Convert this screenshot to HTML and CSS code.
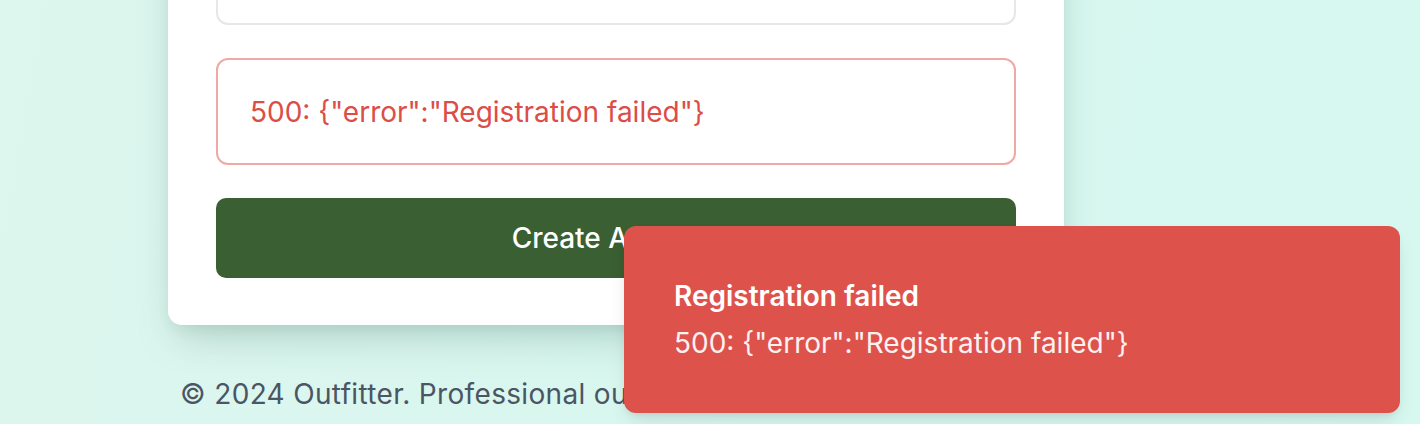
FILE: index.html
```html
<!DOCTYPE html>
<html lang="en">
<head>
<meta charset="utf-8">
<title>Create Account</title>
<link rel="stylesheet" href="styles.css">
</head>
<body>
<main class="page">
  <div class="column">
    <form class="card">
      <div class="input"></div>
      <div class="error-box">500: {"error":"Registration failed"}</div>
      <button type="button" class="submit">Create Account</button>
    </form>
    <footer class="footer">© 2024 Outfitter. Professional outdoor gear for every adventure.</footer>
  </div>
</main>
<div class="toast" role="alert">
  <div class="toast-title">Registration failed</div>
  <div class="toast-desc">500: {"error":"Registration failed"}</div>
</div>
</body>
</html>
```

FILE: styles.css
```css
* { box-sizing: border-box; }
html, body { margin: 0; padding: 0; }
body {
  width: 1420px;
  height: 424px;
  overflow: hidden;
  font-family: Inter, "Noto Sans", sans-serif;
  background: linear-gradient(100deg, #ddf6ee 0%, #d8f7ef 50%, #d6f8ef 100%);
  position: relative;
}
.page {
  display: flex;
  justify-content: flex-start;
  padding-left: 168px;
}
.column {
  width: 896px;
  display: flex;
  flex-direction: column;
  align-items: center;
}
.card {
  width: 896px;
  margin-top: -103px;
  background: #ffffff;
  border-radius: 14px;
  padding: 48px 48px 47px;
  display: flex;
  flex-direction: column;
  gap: 33px;
  box-shadow: 0 20px 40px -8px rgba(40, 90, 75, 0.22), 0 8px 16px -6px rgba(40, 90, 75, 0.12);
}
.input {
  height: 80px;
  border: 2px solid #e5e7eb;
  border-radius: 12px;
}
.error-box {
  height: 107px;
  border: 2px solid #f0a9a4;
  border-radius: 12px;
  padding: 0 32px;
  display: flex;
  align-items: center;
  color: #dc4d47;
  font-size: 28px;
}
.submit {
  height: 80px;
  border: none;
  border-radius: 10px;
  background: #3a5f32;
  color: #ffffff;
  font-family: inherit;
  font-size: 28px;
  font-weight: 500;
}
.footer {
  margin-top: 51px;
  white-space: nowrap;
  color: #4b5563;
  font-size: 28px;
  line-height: 36px;
  letter-spacing: 0.33px;
}
.toast {
  position: absolute;
  left: 624px;
  top: 226px;
  width: 776px;
  height: 187px;
  background: #de524c;
  border-radius: 12px;
  padding: 54px 50px 0;
  color: #ffffff;
  box-shadow: 0 10px 20px -5px rgba(0, 0, 0, 0.12), 0 4px 8px -4px rgba(0, 0, 0, 0.1);
}
.toast-title {
  font-size: 28px;
  font-weight: 600;
  line-height: 32px;
}
.toast-desc {
  margin-top: 15px;
  font-size: 28px;
  line-height: 32px;
  opacity: 0.92;
}
```
